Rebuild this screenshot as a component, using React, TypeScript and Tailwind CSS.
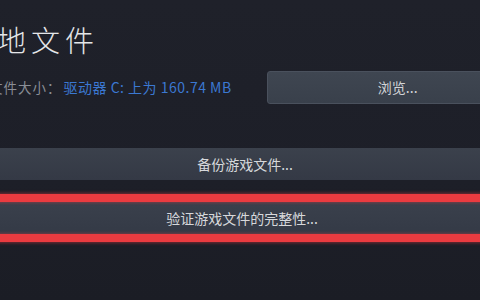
import React from "react";

const cjk = { fontFamily: '"Noto Sans CJK SC", "Noto Sans", sans-serif' };

export default function App() {
  return (
    <div
      className="w-[480px] h-[300px] overflow-hidden bg-[linear-gradient(180deg,#1f212a_0%,#1d1f28_60%,#1b1d25_100%)] text-[#d9dbdd] flex flex-col"
      style={cjk}
    >
      <div className="mt-[20px] h-[38px] flex items-center whitespace-nowrap ml-[-3px] text-[29px] leading-[38px] font-light tracking-[5px] text-[#e4e6e8]">
        地文件
      </div>
      <div className="mt-[13px] h-[33px] flex items-center whitespace-nowrap">
        <div className="ml-[-11px] text-[13.5px] text-[#8a8e96] tracking-[1px]">文件大小：</div>
        <div className="ml-[2px] text-[14px] text-[#3b78d2] tracking-[0.5px]">驱动器 C: 上为 160.74 MB</div>
        <div className="ml-[35px] shrink-0 w-[262px] h-[33px] rounded-[3px] border border-[#4a515d] bg-[linear-gradient(180deg,#3f4651,#39404b)] flex items-center justify-center text-[14px] text-[#d2d4d7]">
          浏览...
        </div>
      </div>
      <div className="mt-[44px] ml-[-7px] mr-[-17px] h-[32px] bg-[linear-gradient(180deg,#3b414c,#343945)] flex items-center justify-center text-[14px] text-[#d6d8db]">
        备份游戏文件...
      </div>
      <div className="mt-[14px] ml-[-10px] mr-[-14px] border-y-[8px] border-[#ea3b40] shadow-[0_0_3px_1px_rgba(234,59,64,0.45)]">
        <div className="h-[32px] bg-[linear-gradient(180deg,#3a404c,#343a46)] flex items-center justify-center text-[14px] text-[#d6d8db] shadow-[inset_0_0_3px_1px_rgba(234,59,64,0.35)]">
          验证游戏文件的完整性...
        </div>
      </div>
      <div className="flex-1" />
    </div>
  );
}
